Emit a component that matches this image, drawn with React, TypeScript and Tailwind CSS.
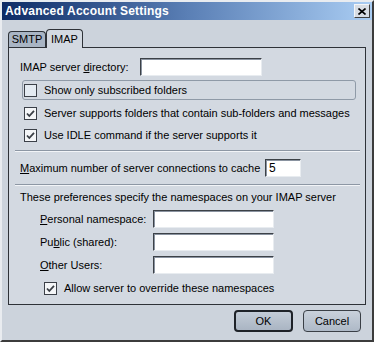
import React from "react";

const font = { fontFamily: '"Liberation Sans", Arial, sans-serif' };

function Check({ checked, light }: { checked: boolean; light?: boolean }) {
  return (
    <div
      className={`w-[13px] h-[13px] shrink-0 border border-[#3b4048] flex items-center justify-center ${
        light ? "bg-[#e4ebf2]" : "bg-[#f4f6f8]"
      }`}
    >
      {checked && (
        <svg width="9" height="9" viewBox="0 0 9 9">
          <path d="M1 4.5 L3.3 7 L8 1.8" stroke="#3a3f46" strokeWidth="1.8" fill="none" />
        </svg>
      )}
    </div>
  );
}

function Input({ w, value }: { w: string; value?: string }) {
  return (
    <div
      className={`${w} h-[18px] bg-white border border-[#3c4147] border-r-[#e8ecf0] border-b-[#e8ecf0] shadow-[inset_1px_1px_0_#8a93a0] flex items-center pl-[3px] text-[12px] text-black`}
    >
      {value}
    </div>
  );
}

export default function App() {
  return (
    <div
      className="w-[374px] h-[342px] bg-[#ccd3dc] border-2 border-[#e9ecf0] border-r-[#3c3c3c] border-b-[#3c3c3c] flex flex-col text-[11px] text-black overflow-hidden"
      style={font}
    >
      {/* title bar */}
      <div className="h-[18px] bg-gradient-to-r from-[#0f2c66] via-[#5a7fb5] to-[#aacdf3] flex items-center pl-[3px] pr-[2px]">
        <span className="text-white font-bold text-[12px] tracking-[0.2px]">
          Advanced Account Settings
        </span>
        <div className="ml-auto w-[16px] h-[14px] bg-[#d8dde4] border border-[#f4f6f8] border-r-[#404040] border-b-[#404040] flex items-center justify-center">
          <svg width="8" height="7" viewBox="0 0 8 7">
            <path d="M0.5 0.5 L7.5 6.5 M7.5 0.5 L0.5 6.5" stroke="#000" strokeWidth="1.6" />
          </svg>
        </div>
      </div>

      <div className="flex flex-col px-[6px] pt-[8px]">
        {/* tabs */}
        <div className="flex items-end h-[19px] relative z-10">
          <div className="w-[38px] h-[16px] bg-[#a9b5c4] border border-[#2e3238] border-b-0 rounded-t-[4px] flex items-center justify-center text-[11px]">
            SMTP
          </div>
          <div className="w-[37px] h-[19px] -mb-[1px] bg-[#d3d9e1] border border-[#2e3238] border-b-0 rounded-t-[4px] flex items-center justify-center text-[11px]">
            IMAP
          </div>
        </div>
        {/* panel */}
        <div className="h-[258px] bg-[#d3d9e1] border border-[#2e3238] flex flex-col pl-[11px] pr-[6px]">
          <div className="flex items-center h-[18px] mt-[10px]">
            <span className="w-[120px]">
              IMAP server <u>d</u>irectory:
            </span>
            <Input w="w-[122px]" />
          </div>
          <div className="ml-[2px] w-[334px] h-[20px] mt-[4px] border border-[#8f9aa7] rounded-[3px] flex items-center pl-[1px] gap-[7px]">
            <Check checked={false} light />
            <span>Show only subscribed folders</span>
          </div>
          <div className="flex items-center h-[22px] mt-[2px] pl-[4px] gap-[7px]">
            <Check checked />
            <span>Server supports folders that contain sub-folders and messages</span>
          </div>
          <div className="flex items-center h-[22px] pl-[4px] gap-[7px]">
            <Check checked />
            <span>Use IDLE command if the server supports it</span>
          </div>
          <div className="-ml-[5px] mt-[4px] w-[345px] border-t border-[#8d97a4] border-b border-b-[#f2f4f7]" />
          <div className="flex items-center h-[18px] mt-[7px]">
            <span className="w-[245px]">
              <u>M</u>aximum number of server connections to cache
            </span>
            <Input w="w-[36px]" value="5" />
          </div>
          <div className="-ml-[5px] mt-[7px] w-[345px] border-t border-[#8d97a4] border-b border-b-[#f2f4f7]" />
          <div className="flex items-center h-[16px] mt-[3px]">
            These preferences specify the namespaces on your IMAP server
          </div>
          <div className="flex items-center h-[18px] mt-[5px] pl-[20px]">
            <span className="w-[113px]">
              <u>P</u>ersonal namespace:
            </span>
            <Input w="w-[121px]" />
          </div>
          <div className="flex items-center h-[18px] mt-[5px] pl-[20px]">
            <span className="w-[113px]">
              Pu<u>b</u>lic (shared):
            </span>
            <Input w="w-[121px]" />
          </div>
          <div className="flex items-center h-[18px] mt-[5px] pl-[20px]">
            <span className="w-[113px]">
              <u>O</u>ther Users:
            </span>
            <Input w="w-[121px]" />
          </div>
          <div className="flex items-center h-[18px] mt-[5px] pl-[24px] gap-[7px]">
            <Check checked />
            <span>Allow server to override these namespaces</span>
          </div>
        </div>
        {/* buttons */}
        <div className="flex justify-end gap-[10px] mt-[5px] pr-[5px]">
          <div className="w-[59px] h-[22px] rounded-[4px] border-2 border-[#1e2228] bg-gradient-to-b from-[#c3ccd7] to-[#aab5c3] flex items-center justify-center text-[11px]">
            OK
          </div>
          <div className="w-[58px] h-[22px] rounded-[4px] border border-[#3a3f46] bg-gradient-to-b from-[#c9d1db] to-[#aeb9c7] flex items-center justify-center text-[11px]">
            Cancel
          </div>
        </div>
      </div>
    </div>
  );
}
